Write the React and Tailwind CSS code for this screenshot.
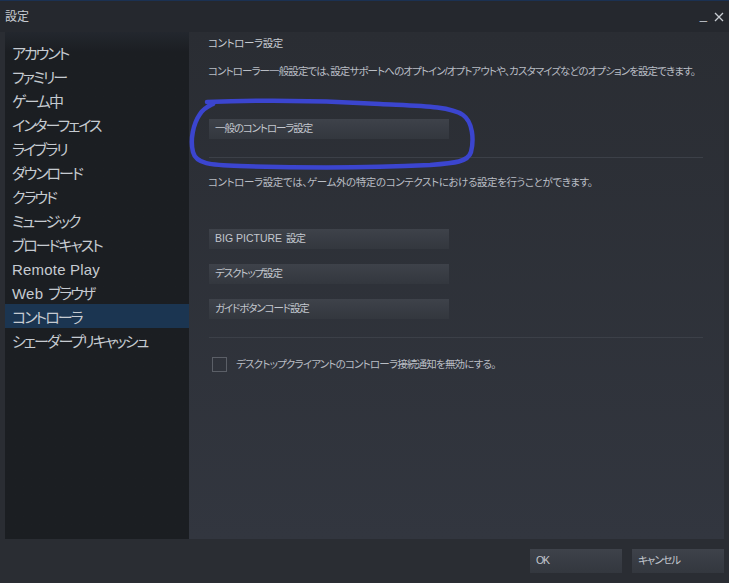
import React from 'react';

const navItems = [
  'アカウント',
  'ファミリー',
  'ゲーム中',
  'インターフェイス',
  'ライブラリ',
  'ダウンロード',
  'クラウド',
  'ミュージック',
  'ブロードキャスト',
  'Remote Play',
  'Web ブラウザ',
  'コントローラ',
  'シェーダープリキャッシュ',
];

const font = "font-['Liberation_Sans','Noto_Sans_CJK_JP',sans-serif] [font-feature-settings:'palt']";

function SteamButton({ children, className = '' }) {
  return (
    <div
      className={`flex items-center px-[6px] text-[10.5px] tracking-[-1.1px] text-[#c3c7ce] bg-gradient-to-b from-[#3e424a] to-[#33373e] ${className}`}
    >
      {children}
    </div>
  );
}

function NavLabel({ item }) {
  if (item === 'Remote Play') return <span className="tracking-[0.2px]">{item}</span>;
  if (item.startsWith('Web ')) {
    return (
      <>
        <span className="tracking-[0.2px]">Web</span>
        <span className="ml-[5px] tracking-[-2px]">{item.slice(4)}</span>
      </>
    );
  }
  return <span className="tracking-[-2px]">{item}</span>;
}

export default function App() {
  return (
    <div className={`relative w-[729px] h-[583px] overflow-hidden bg-[#2a2d33] flex flex-col ${font}`}>
      {/* title bar */}
      <div className="h-[32px] shrink-0 flex items-center justify-between pl-[5px] pr-[5px] border-t border-[#1b3152] bg-[#25282e]">
        <span className="text-[12px] text-[#c8ccd2]">設定</span>
        <div className="flex items-center gap-[7px] text-[#c8ccd2]">
          <span className="text-[13px] leading-none -mt-[4px]">_</span>
          <svg width="10" height="10" viewBox="0 0 10 10" className="mt-[1px]">
            <path d="M1 1 L9 9 M9 1 L1 9" stroke="#c8ccd2" strokeWidth="1.3" />
          </svg>
        </div>
      </div>

      {/* body */}
      <div className="flex h-[507px] shrink-0 px-[5px]">
        {/* sidebar */}
        <div className="w-[184px] shrink-0 bg-[#1b1e22] bg-gradient-to-b from-[#23272e] via-[#1b1e22] via-[4%] to-[#1b1e22] pt-[8px]">
          {navItems.map((item) => (
            <div
              key={item}
              className={`h-[24px] flex items-center pt-[4px] pl-[7px] text-[15px] text-[#c6cbd1] ${
                item === 'コントローラ' ? 'bg-[#1b3551]' : ''
              }`}
            >
              <NavLabel item={item} />
            </div>
          ))}
        </div>

        {/* content */}
        <div className="flex-1 min-w-0 overflow-hidden bg-gradient-to-b from-[#2a2d33] to-[#32363f] pl-[19px] pr-[21px] text-[10.5px] tracking-[-0.4px] text-[#b9bdc4] whitespace-nowrap">
          <div className="h-[22px] mt-[1px] flex items-center text-[#c6cbd1]">コントローラ設定</div>
          <div className="h-[16px] mt-[9px] flex items-center tracking-[-0.9px]">
            コントローラー一般設定では、設定サポートへのオプトイン/オプトアウトや、カスタマイズなどのオプションを設定できます。
          </div>
          <SteamButton className="w-[240px] h-[20px] mt-[39px] ml-[1px]">一般のコントローラ設定</SteamButton>
          <div className="h-px bg-[#3c4048] mt-[18px] ml-[1px]" />
          <div className="h-[16px] mt-[17px] flex items-center">
            コントローラ設定では、ゲーム外の特定のコンテクストにおける設定を行うことができます。
          </div>
          <div className="flex flex-col gap-[15px] mt-[38px] ml-[1px]">
            <SteamButton className="w-[240px] h-[20px]">
              <span className="tracking-[0px]">BIG PICTURE</span>
              <span className="ml-[4px]">設定</span>
            </SteamButton>
            <SteamButton className="w-[240px] h-[20px]">デスクトップ設定</SteamButton>
            <SteamButton className="w-[240px] h-[20px]">ガイドボタンコード設定</SteamButton>
          </div>
          <div className="h-px bg-[#3c4048] mt-[18px] ml-[1px]" />
          <div className="flex items-center gap-[9px] mt-[19px] ml-[4px]">
            <div className="w-[15px] h-[15px] border border-[#5b5f67]" />
            <span className="text-[#b9bdc4] tracking-[-0.8px]">デスクトップクライアントのコントローラ接続通知を無効にする。</span>
          </div>
        </div>
      </div>

      {/* footer */}
      <div className="flex justify-end gap-[10px] pt-[10px] pr-[5px]">
        <SteamButton className="w-[92px] h-[24px]">OK</SteamButton>
        <SteamButton className="w-[92px] h-[24px]">キャンセル</SteamButton>
      </div>

      {/* hand-drawn annotation */}
      <svg
        className="absolute left-0 top-0 pointer-events-none"
        width="729"
        height="583"
        viewBox="0 0 729 583"
      >
        <path
          d="M207 102 C 260 100, 330 101, 380 104 C 420 106, 450 106, 463 115 C 473 122, 474 140, 471 152 C 468 162, 455 163, 430 165 C 370 168, 300 168, 240 166 C 210 165, 196 164, 193 152 C 190 140, 193 124, 200 114 C 204 108, 209 106, 213 104"
          fill="none"
          stroke="#3b45cf"
          strokeWidth="4.5"
          strokeLinecap="round"
          strokeLinejoin="round"
        />
      </svg>
    </div>
  );
}
